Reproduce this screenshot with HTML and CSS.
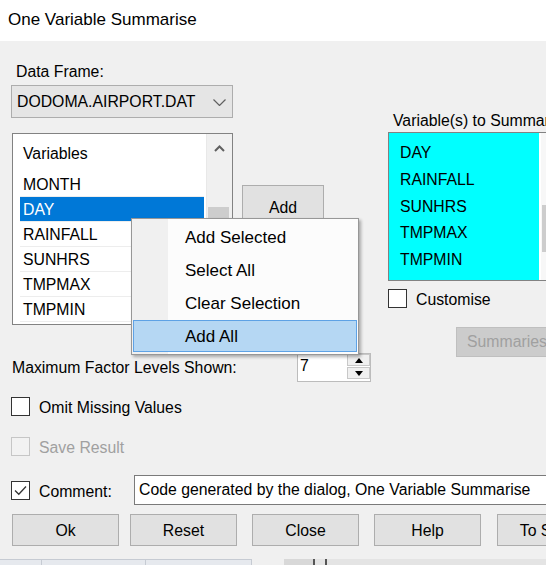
FILE: index.html
```html
<!DOCTYPE html>
<html>
<head>
<meta charset="utf-8">
<title>One Variable Summarise</title>
<link rel="stylesheet" href="styles.css">
</head>
<body>
<div class="titlebar">One Variable Summarise</div>
<div class="dialog">
  <div class="top">
    <div class="col-left">
      <div class="df-label">Data Frame:</div>
      <div class="combo">
        <span>DODOMA.AIRPORT.DAT</span>
        <svg class="chev" width="13" height="7" viewBox="0 0 13 7"><polyline points="0.5,0.5 6.5,6.5 12.5,0.5" fill="none" stroke="#606060" stroke-width="1.2"/></svg>
      </div>
      <div class="varlist">
        <div class="varlist-body">
          <div class="varlist-head">Variables</div>
          <div class="row">MONTH</div>
          <div class="row selected">DAY</div>
          <div class="row">RAINFALL</div>
          <div class="row">SUNHRS</div>
          <div class="row">TMPMAX</div>
          <div class="row">TMPMIN</div>
        </div>
        <div class="vscroll">
          <div class="vscroll-up">
            <svg width="11" height="7" viewBox="0 0 11 7"><polyline points="1,6 5.5,1.5 10,6" fill="none" stroke="#606060" stroke-width="2"/></svg>
          </div>
          <div class="vscroll-thumb"></div>
        </div>
      </div>
    </div>
    <div class="col-mid">
      <div class="btn btn-add">Add</div>
    </div>
    <div class="col-right">
      <div class="right-label">Variable(s) to Summarise</div>
      <div class="sellist">
        <div class="sellist-body">
          <div class="sel-item">DAY</div>
          <div class="sel-item">RAINFALL</div>
          <div class="sel-item">SUNHRS</div>
          <div class="sel-item">TMPMAX</div>
          <div class="sel-item">TMPMIN</div>
        </div>
        <div class="sellist-scroll"><div class="sellist-thumb"></div></div>
      </div>
      <div class="check-row customise">
        <span class="checkbox"></span><span class="check-label">Customise</span>
      </div>
      <div class="btn btn-disabled summaries">Summaries...</div>
    </div>
  </div>

  <div class="max-row">
    <div class="max-label">Maximum Factor Levels Shown:</div>
    <div class="spinner">
      <span class="spin-value">7</span>
      <div class="spin-buttons">
        <div class="spin-btn"><svg width="8" height="5" viewBox="0 0 8 5"><polygon points="0,5 4,0 8,5" fill="#000"/></svg></div>
        <div class="spin-btn"><svg width="8" height="5" viewBox="0 0 8 5"><polygon points="0,0 8,0 4,5" fill="#000"/></svg></div>
      </div>
    </div>
  </div>

  <div class="check-row omit">
    <span class="checkbox"></span><span class="check-label">Omit Missing Values</span>
  </div>

  <div class="check-row save">
    <span class="checkbox disabled"></span><span class="check-label disabled-text">Save Result</span>
  </div>

  <div class="comment-row">
    <span class="checkbox checked">
      <svg width="17" height="17" viewBox="0 0 17 17"><polyline points="3,8.5 6.8,12.3 14,4.5" fill="none" stroke="#333" stroke-width="1.3"/></svg>
    </span>
    <span class="comment-label">Comment:</span>
    <div class="textbox">Code generated by the dialog, One Variable Summarise</div>
  </div>

  <div class="btn-row">
    <div class="btn btn-main">Ok</div>
    <div class="btn btn-main btn-reset">Reset</div>
    <div class="btn btn-main btn-close">Close</div>
    <div class="btn btn-main btn-help">Help</div>
    <div class="btn btn-main btn-script">To Script</div>
  </div>
</div>
<div class="behind">
  <div class="bh-grid"><span class="bh-c1"></span><span class="bh-c2"></span><span class="bh-c3"></span></div>
  <div class="bh-gap"></div>
  <div class="bh-gray"></div>
  <div class="bh-split"></div>
  <div class="bh-rest"></div>
</div>

<div class="menu">
  <div class="menu-item">Add Selected</div>
  <div class="menu-item">Select All</div>
  <div class="menu-item">Clear Selection</div>
  <div class="menu-item active">Add All</div>
</div>
</body>
</html>
```
FILE: styles.css
```css
html, body {
  margin: 0;
  padding: 0;
}
body {
  width: 546px;
  height: 565px;
  overflow: hidden;
  position: relative;
  font-family: "Liberation Sans", Arial, sans-serif;
  font-size: 15.8px;
  color: #000;
  background: #f0f0f0;
}

.titlebar {
  height: 41px;
  box-sizing: border-box;
  background: #fff;
  line-height: 40px;
  padding-left: 8px;
  font-size: 17px;
}

.dialog {
  height: 518px;
  background: #f0f0f0;
  display: flex;
  flex-direction: column;
  overflow: hidden;
}

.top {
  display: flex;
  height: 312px;
  flex: none;
}

.col-left {
  margin-left: 11px;
  width: 222px;
  flex: none;
  padding-top: 21px;
}
.df-label {
  padding-left: 5px;
  line-height: 18px;
  padding-top: 1px;
  height: 18px;
}
.combo {
  margin-top: 4px;
  height: 33px;
  box-sizing: border-box;
  border: 1px solid #adadad;
  background: #e5e5e5;
  display: flex;
  align-items: center;
  justify-content: space-between;
  padding: 0 6px 0 5px;
}
.chev {
  display: block;
  margin-top: 1px;
}

.varlist {
  margin-top: 15px;
  margin-left: 1px;
  width: 221px;
  height: 192px;
  box-sizing: border-box;
  border: 1px solid #828282;
  background: #fff;
  display: flex;
}
.varlist-body {
  flex: 1;
  padding: 0 2px 0 7px;
}
.varlist-head {
  height: 38px;
  box-sizing: border-box;
  padding-top: 11px;
  padding-left: 3px;
  line-height: 18px;
}
.row {
  height: 25px;
  box-sizing: border-box;
  border-bottom: 1px solid #ededed;
  line-height: 25px;
  padding-left: 3px;
  overflow: hidden;
}
.row.selected {
  background: #0078d7;
  color: #fff;
}
.vscroll {
  width: 26px;
  flex: none;
  background: #f0f0f0;
  border-left: 1px solid #e8e8e8;
  box-sizing: border-box;
}
.vscroll-up {
  height: 25px;
  display: flex;
  align-items: center;
  justify-content: center;
}
.vscroll-up svg {
  display: block;
  margin-top: 4px;
}
.vscroll-thumb {
  margin: 48px 3px 0 1px;
  height: 70px;
  background: #cdcdcd;
}

.col-mid {
  margin-left: 9px;
  padding-top: 144px;
  flex: none;
}
.btn {
  box-sizing: border-box;
  background: #e1e1e1;
  border: 1px solid #adadad;
  display: flex;
  align-items: center;
  justify-content: center;
  white-space: nowrap;
}
.btn-add {
  width: 82px;
  height: 46px;
}

.col-right {
  margin-left: 64px;
  padding-top: 71px;
  width: 220px;
  flex: none;
}
.right-label {
  padding-left: 5px;
  line-height: 18px;
  margin-bottom: 2px;
  white-space: nowrap;
}
.sellist {
  height: 149px;
  box-sizing: border-box;
  border: 1px solid #828282;
  border-right: none;
  background: #fff;
  display: flex;
}
.sellist-body {
  width: 150px;
  flex: none;
  background: #00ffff;
  padding-top: 7px;
  padding-left: 11px;
  box-sizing: border-box;
}
.sel-item {
  line-height: 26.75px;
}
.sellist-scroll {
  margin-left: 2px;
  width: 26px;
  background: #f7f7f7;
}
.sellist-thumb {
  margin: 72px 2px 0 1px;
  height: 47px;
  background: #cdcdcd;
}

.check-row {
  display: flex;
  align-items: center;
  height: 19px;
}
.checkbox {
  width: 19px;
  height: 19px;
  box-sizing: border-box;
  border: 1px solid #333;
  background: #fff;
  flex: none;
}
.checkbox svg {
  display: block;
}
.checkbox.disabled {
  border-color: #c6c6c6;
  background: #f2f2f2;
}
.check-label {
  margin-left: 9px;
  line-height: 18px;
  padding-top: 2px;
}
.disabled-text {
  color: #a0a0a0;
}
.customise {
  margin-top: 8px;
}
.summaries {
  margin-top: 19px;
  margin-left: 68px;
  height: 30px;
  width: 120px;
  justify-content: flex-start;
  padding-left: 10px;
  background: #cccccc;
  border-color: #bfbfbf;
  color: #a0a0a0;
}

.max-row {
  display: flex;
  align-items: center;
  height: 29px;
  padding-left: 12px;
  flex: none;
}
.max-label {
  width: 285px;
  flex: none;
  padding-top: 1px;
}
.spinner {
  width: 74px;
  height: 29px;
  box-sizing: border-box;
  border: 1px solid #bcbcbc;
  background: #fff;
  display: flex;
  align-items: flex-start;
}
.spin-value {
  padding-left: 2px;
  line-height: 24px;
}
.spin-buttons {
  margin-left: auto;
  width: 23px;
}
.spin-btn {
  height: 12px;
  box-sizing: border-box;
  border: 1px solid #c8c8c8;
  background: #f0f0f0;
  display: flex;
  align-items: center;
  justify-content: center;
}
.spin-btn + .spin-btn {
  margin-top: 1px;
}
.spin-btn svg {
  display: block;
}

.omit {
  margin-top: 15px;
  padding-left: 11px;
  flex: none;
}
.save {
  margin-top: 21px;
  padding-left: 11px;
  flex: none;
}

.comment-row {
  margin-top: 19px;
  height: 30px;
  display: flex;
  align-items: center;
  padding-left: 11px;
  flex: none;
}
.comment-label {
  margin-left: 9px;
  width: 95px;
  flex: none;
  line-height: 18px;
  padding-top: 4px;
}
.textbox {
  width: 440px;
  height: 30px;
  flex: none;
  box-sizing: border-box;
  border: 1px solid #7a7a7a;
  background: #fff;
  padding-left: 4px;
  line-height: 28px;
  white-space: nowrap;
}

.btn-row {
  margin-top: 9px;
  display: flex;
  padding-left: 12px;
  flex: none;
}
.btn-main {
  width: 107px;
  height: 32px;
  flex: none;
  padding-top: 1px;
}
.btn-reset { margin-left: 11px; }
.btn-close { margin-left: 15px; }
.btn-help { margin-left: 15px; }
.btn-script { margin-left: 16px; }

.behind {
  height: 6px;
  display: flex;
}
.bh-grid {
  width: 252px;
  background: #e6e9ee;
  border-top: 1px solid #c6cbd3;
  border-right: 1px solid #c6cbd3;
  box-sizing: border-box;
  display: flex;
}
.bh-grid span {
  display: block;
  height: 100%;
  box-sizing: border-box;
  border-right: 1px solid #c6cbd3;
}
.bh-c1 { width: 42px; }
.bh-c2 { width: 104px; }
.bh-c3 { width: 104px; border-right: none !important; }
.bh-gap {
  width: 32px;
  background: #f0f0f0;
}
.bh-gray {
  width: 29px;
  background: #d8d8d8;
}
.bh-split {
  width: 14px;
  background: #e4e4e4;
  border-left: 2px solid #555;
  border-right: 2px solid #555;
  box-sizing: border-box;
}
.bh-rest {
  flex: 1;
  background: #e4e4e4;
}

.menu {
  position: absolute;
  left: 131px;
  top: 218px;
  width: 228px;
  height: 137px;
  box-sizing: border-box;
  border: 1px solid #979797;
  background: linear-gradient(to right, #f0f0f0 36px, #fcfcfc 36px);
  padding: 2px 1px 1px 1px;
  box-shadow: 2px 2px 3px rgba(0, 0, 0, 0.3);
  font-size: 17px;
}
.menu-item {
  height: 33px;
  line-height: 33px;
  padding-left: 52px;
  box-sizing: border-box;
  white-space: nowrap;
}
.menu-item.active {
  height: 32px;
  background: #b5d7f3;
  border: 1px solid #5ea2e5;
  line-height: 31px;
  padding-left: 51px;
}
```
